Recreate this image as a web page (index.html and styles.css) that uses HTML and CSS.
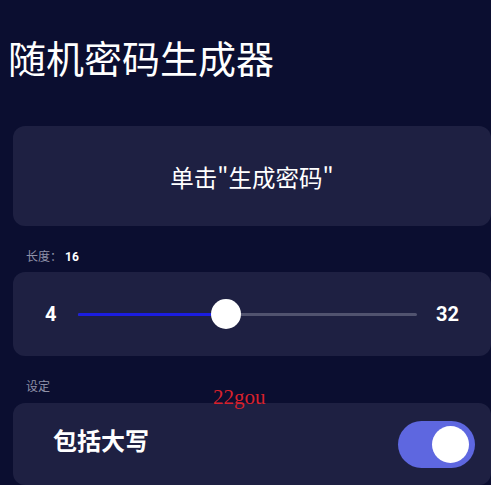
FILE: index.html
```html
<!DOCTYPE html>
<html lang="zh-CN">
<head>
<meta charset="utf-8">
<title>随机密码生成器</title>
<link rel="stylesheet" href="styles.css">
</head>
<body>
<main class="page">
  <h1 class="title">随机密码生成器</h1>

  <div class="card result-card">
    <span class="result-text">单击"生成密码"</span>
  </div>

  <div class="section-label">长度：<span class="label-value">16</span></div>
  <div class="card slider-card">
    <span class="slider-num slider-min">4</span>
    <div class="slider-track">
      <div class="slider-active" style="width: 43.5%"></div>
      <div class="slider-thumb" style="left: 43.5%"></div>
    </div>
    <span class="slider-num slider-max">32</span>
  </div>

  <div class="section-label settings-label">设定</div>
  <div class="card toggle-card">
    <span class="toggle-text">包括大写</span>
    <div class="switch on"><div class="switch-knob"></div></div>
  </div>

  <div class="watermark">22gou</div>
</main>
</body>
</html>
```

FILE: styles.css
```css
html, body {
  margin: 0;
  padding: 0;
  background: #0b0e30;
}

body {
  font-family: "Noto Sans CJK SC", "Noto Sans", sans-serif;
  color: #ffffff;
  overflow: hidden;
}

.page {
  position: relative;
  display: flex;
  flex-direction: column;
  padding: 0 0 0 8px;
  height: 485px;
  box-sizing: border-box;
}

.title {
  margin: 0;
  padding-top: 38px;
  font-size: 38px;
  line-height: 38px;
  font-weight: 400;
  margin-bottom: 50px;
  letter-spacing: 0;
}

.card {
  margin-left: 5px;
  background: #1e2042;
  border-radius: 12px;
  flex-shrink: 0;
}

.result-card {
  height: 100px;
  display: flex;
  align-items: center;
  justify-content: center;
}

.result-text {
  font-size: 23.5px;
  font-family: "Noto Sans CJK SC", sans-serif;
  font-weight: 400;
  margin-top: 2px;
}

.section-label {
  margin: 22px 0 8px 18px;
  height: 16px;
  font-size: 12px;
  line-height: 16px;
  color: #8f91a8;
  flex-shrink: 0;
}

.settings-label {
  margin-bottom: 9px;
}

.label-value {
  font-family: "Roboto", sans-serif;
  font-weight: 700;
  color: #ffffff;
  font-size: 12px;
  margin-left: 3px;
}

.slider-card {
  height: 84px;
  display: flex;
  align-items: center;
  padding: 0 32px;
  box-sizing: border-box;
}

.slider-num {
  font-family: "Roboto", sans-serif;
  font-weight: 700;
  font-size: 20px;
  line-height: 20px;
}

.slider-min {
  margin-right: 22px;
}

.slider-max {
  margin-left: 19px;
}

.slider-track {
  position: relative;
  flex: 1;
  height: 3px;
  border-radius: 2px;
  background: #51536f;
}

.slider-active {
  height: 100%;
  border-radius: 2px 0 0 2px;
  background: #1b1de0;
}

.slider-thumb {
  position: absolute;
  top: 50%;
  width: 30px;
  height: 30px;
  border-radius: 50%;
  background: #ffffff;
  transform: translate(-50%, -50%);
}

.toggle-card {
  height: 82px;
  display: flex;
  align-items: center;
  justify-content: space-between;
  padding: 0 16px 0 40px;
  box-sizing: border-box;
}

.toggle-text {
  font-size: 24px;
  font-weight: 700;
  margin-top: -10px;
}

.switch {
  width: 77px;
  height: 47px;
  border-radius: 24px;
  background: #5e67e0;
  display: flex;
  align-items: center;
  justify-content: flex-end;
  padding: 0 6px;
  box-sizing: border-box;
}

.switch-knob {
  width: 37px;
  height: 37px;
  border-radius: 50%;
  background: #ffffff;
}

.watermark {
  position: absolute;
  left: 213px;
  top: 387px;
  font-family: "Liberation Serif", serif;
  font-size: 21px;
  line-height: 21px;
  color: #d8212c;
}
```
